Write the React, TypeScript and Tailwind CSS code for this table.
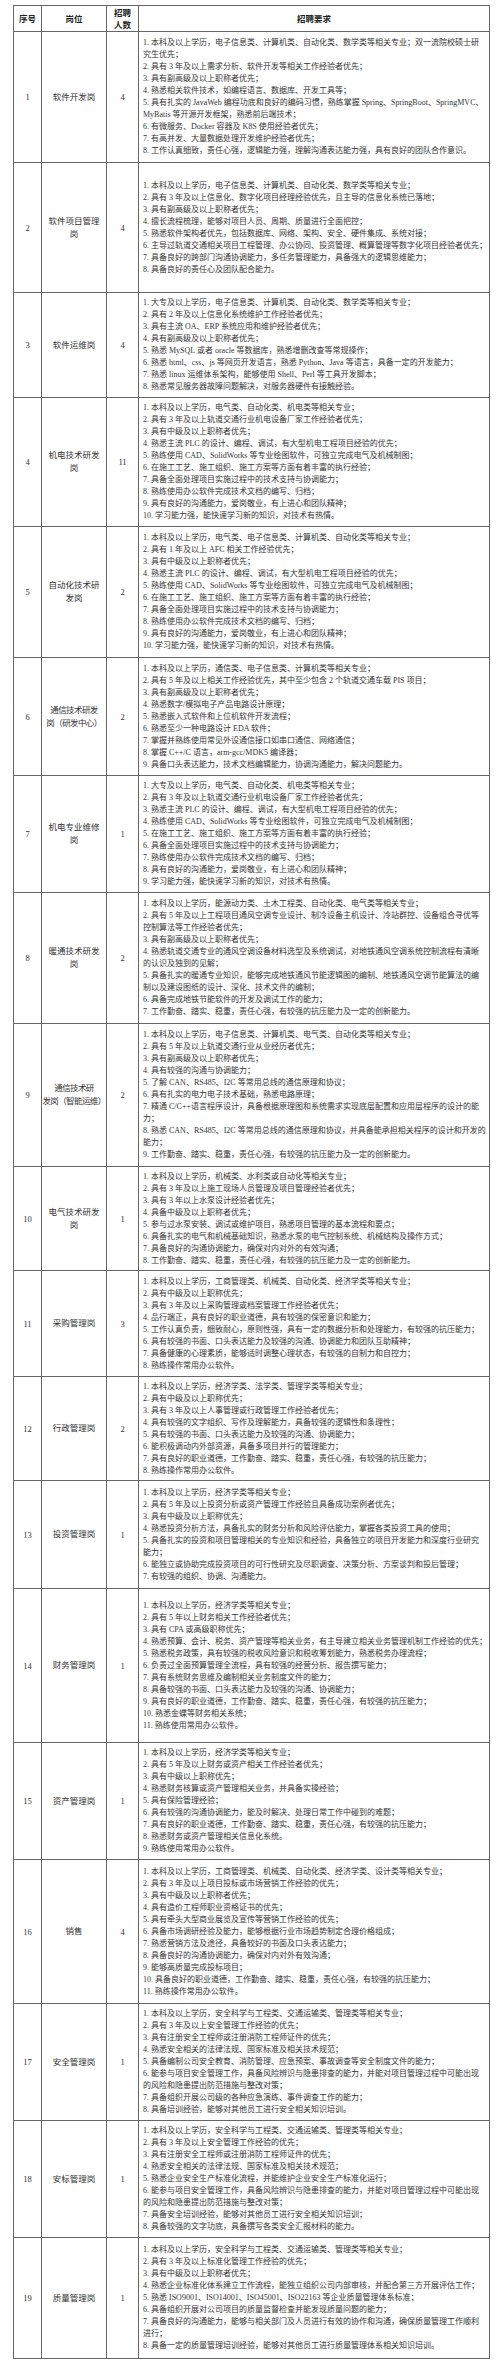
import React from "react";

type Job = {
  no: number;
  title: string;
  count: string;
  h: string;
  tight?: boolean;
  items: string[];
};

const jobs: Job[] = [
  {
    no: 1,
    title: "软件开发岗",
    count: "4",
    h: "h-[131px]",
    items: [
      "1. 本科及以上学历，电子信息类、计算机类、自动化类、数学类等相关专业；双一流院校硕士研\n究生优先；",
      "2. 具有 3 年及以上需求分析、软件开发等相关工作经验者优先；",
      "3. 具有副高级及以上职称者优先；",
      "4. 熟悉相关软件技术，如编程语言、数据库、开发工具等；",
      "5. 具有扎实的 JavaWeb 编程功底和良好的编码习惯，熟练掌握 Spring、SpringBoot、SpringMVC、\nMyBatis 等开源开发框架，熟悉前后端技术；",
      "6. 有微服务、Docker 容器及 K8S 使用经验者优先；",
      "7. 有高并发、大量数据处理开发维护经验者优先；",
      "8. 工作认真细致，责任心强，逻辑能力强，理解沟通表达能力强，具有良好的团队合作意识。",
    ],
  },
  {
    no: 2,
    title: "软件项目管理\n岗",
    count: "4",
    h: "h-[130px]",
    items: [
      "1. 本科及以上学历，电子信息类、计算机类、自动化类、数学类等相关专业；",
      "2. 具有 3 年及以上信息化、数字化项目经理经验优先，且主导的信息化系统已落地；",
      "3. 具有副高级及以上职称者优先；",
      "4. 擅长流程梳理，能够对项目人员、周期、质量进行全面把控；",
      "5. 熟悉软件架构者优先，包括数据库、网络、架构、安全、硬件集成、系统对接；",
      "6. 主导过轨道交通相关项目工程管理、办公协同、投资管理、概算管理等数字化项目经验者优先；",
      "7. 具备良好的跨部门沟通协调能力，多任务管理能力，具备强大的逻辑思维能力；",
      "8. 具备良好的责任心及团队配合能力。",
    ],
  },
  {
    no: 3,
    title: "软件运维岗",
    count: "4",
    h: "h-[105px]",
    items: [
      "1. 大专及以上学历，电子信息类、计算机类、自动化类、数学类等相关专业；",
      "2. 具有 2 年及以上信息化系统维护工作经验者优先；",
      "3. 具有主流 OA、ERP 系统应用和维护经验者优先；",
      "4. 具有副高级及以上职称者优先；",
      "5. 熟悉 MySQL 或者 oracle 等数据库，熟悉增删改查等常规操作；",
      "6. 熟悉 html、css、js 等网页开发语言，熟悉 Python、Java 等语言，具备一定的开发能力；",
      "7. 熟悉 linux 运维体系架构，能够使用 Shell、Perl 等工具开发脚本；",
      "8. 熟悉常见服务器故障问题解决，对服务器硬件有接触经验。",
    ],
  },
  {
    no: 4,
    title: "机电技术研发\n岗",
    count: "11",
    h: "h-[129px]",
    items: [
      "1. 本科及以上学历，电气类、自动化类、机电类等相关专业；",
      "2. 具有 3 年及以上轨道交通行业机电设备厂家工作经验者优先；",
      "3. 具有中级及以上职称者优先；",
      "4. 熟悉主流 PLC 的设计、编程、调试，有大型机电工程项目经验的优先；",
      "5. 熟练使用 CAD、SolidWorks 等专业绘图软件，可独立完成电气及机械制图；",
      "6. 在施工工艺、施工组织、施工方案等方面有着丰富的执行经验；",
      "7. 具备全面处理项目实施过程中的技术支持与协调能力；",
      "8. 熟练使用办公软件完成技术文档的编写、归档；",
      "9. 具有良好的沟通能力，爱岗敬业，有上进心和团队精神；",
      "10. 学习能力强，能快速学习新的知识，对技术有热情。",
    ],
  },
  {
    no: 5,
    title: "自动化技术研\n发岗",
    count: "2",
    h: "h-[131px]",
    items: [
      "1. 本科及以上学历，电气类、电子信息类、计算机类、自动化类等相关专业；",
      "2. 具有 1 年及以上 AFC 相关工作经验优先；",
      "3. 具有中级及以上职称者优先；",
      "4. 熟悉主流 PLC 的设计、编程、调试，有大型机电工程项目经验的优先；",
      "5. 熟练使用 CAD、SolidWorks 等专业绘图软件，可独立完成电气及机械制图；",
      "6. 在施工工艺、施工组织、施工方案等方面有着丰富的执行经验；",
      "7. 具备全面处理项目实施过程中的技术支持与协调能力；",
      "8. 熟练使用办公软件完成技术文档的编写、归档；",
      "9. 具有良好的沟通能力，爱岗敬业，有上进心和团队精神；",
      "10. 学习能力强，能快速学习新的知识，对技术有热情。",
    ],
  },
  {
    no: 6,
    title: "通信技术研发\n岗（研发中心）",
    count: "2",
    h: "h-[118px]",
    tight: true,
    items: [
      "1. 本科及以上学历，通信类、电子信息类、计算机类等相关专业；",
      "2. 具有 5 年及以上相关工作经验优先，其中至少包含 2 个轨道交通车载 PIS 项目；",
      "3. 具有副高级及以上职称者优先；",
      "4. 熟悉数字/模拟电子产品电路设计原理；",
      "5. 熟悉嵌入式软件和上位机软件开发流程；",
      "6. 熟悉至少一种电路设计 EDA 软件；",
      "7. 掌握并熟练使用常见外设通信接口如串口通信、网络通信；",
      "8. 掌握 C++/C 语言，arm-gcc/MDK5 编译器；",
      "9. 具备口头表达能力，技术文档编辑能力，协调沟通能力，解决问题能力。",
    ],
  },
  {
    no: 7,
    title: "机电专业维修\n岗",
    count: "1",
    h: "h-[117px]",
    items: [
      "1. 大专及以上学历，电气类、自动化类、机电类等相关专业；",
      "2. 具有 3 年及以上轨道交通行业机电设备厂家工作经验者优先；",
      "3. 熟悉主流 PLC 的设计、编程、调试，有大型机电工程项目经验的优先；",
      "4. 熟练使用 CAD、SolidWorks 等专业绘图软件，可独立完成电气及机械制图；",
      "5. 在施工工艺、施工组织、施工方案等方面有着丰富的执行经验；",
      "6. 具备全面处理项目实施过程中的技术支持与协调能力；",
      "7. 熟练使用办公软件完成技术文档的编写、归档；",
      "8. 具有良好的沟通能力，爱岗敬业，有上进心和团队精神；",
      "9. 学习能力强，能快速学习新的知识，对技术有热情。",
    ],
  },
  {
    no: 8,
    title: "暖通技术研发\n岗",
    count: "2",
    h: "h-[131px]",
    items: [
      "1. 本科及以上学历，能源动力类、土木工程类、自动化类、电气类等相关专业；",
      "2. 具有 5 年及以上工程项目通风空调专业设计、制冷设备主机设计、冷站群控、设备组合寻优等\n控制算法等工作经验者优先；",
      "3. 具有副高级及以上职称者优先；",
      "4. 熟悉轨道交通专业的通风空调设备材料选型及系统调试，对地铁通风空调系统控制流程有清晰\n的认识及独到的见解；",
      "5. 具备扎实的暖通专业知识，能够完成地铁通风节能逻辑图的编制、地铁通风空调节能算法的编\n制以及建设图纸的设计、深化、技术文件的编制；",
      "6. 具备完成地铁节能软件的开发及调试工作的能力；",
      "7. 工作勤奋、踏实、稳重，责任心强，有较强的抗压能力及一定的创新能力。",
    ],
  },
  {
    no: 9,
    title: "通信技术研\n发岗（智能运维）",
    count: "2",
    h: "h-[143px]",
    tight: true,
    items: [
      "1. 本科及以上学历，电子信息类、计算机类、电气类、自动化类等相关专业；",
      "2. 具有 5 年及以上轨道交通行业从业经历者优先；",
      "3. 具有副高级及以上职称者优先；",
      "4. 具有较强的沟通与协调能力；",
      "5. 了解 CAN、RS485、I2C 等常用总线的通信原理和协议；",
      "6. 具有扎实的电力电子技术基础，熟悉电路原理；",
      "7. 精通 C/C++语言程序设计，具备根据原理图和系统需求实现底层配置和应用层程序的设计的能\n力；",
      "8. 熟悉 CAN、RS485、I2C 等常用总线的通信原理和协议，并具备能承担相关程序的设计和开发的\n能力；",
      "9. 工作勤奋、踏实、稳重，责任心强，有较强的抗压能力及一定的创新能力。",
    ],
  },
  {
    no: 10,
    title: "电气技术研发\n岗",
    count: "1",
    h: "h-[104px]",
    items: [
      "1. 本科及以上学历，机械类、水利类或自动化等相关专业；",
      "2. 具有 3 年及以上施工现场人员管理及项目管理经验者优先；",
      "3. 具有 3 年以上水泵设计经验者优先；",
      "4. 具备中级及以上职称者优先；",
      "5. 参与过水泵安装、调试或维护项目，熟悉项目管理的基本流程和要点；",
      "6. 具备扎实的电气和机械基础知识，熟悉水泵的电气控制系统、机械结构及操作方式；",
      "7. 具备良好的沟通协调能力，确保对内对外的有效沟通；",
      "8. 工作勤奋、踏实、稳重，责任心强，有较强的抗压能力及一定的创新能力。",
    ],
  },
  {
    no: 11,
    title: "采购管理岗",
    count: "3",
    h: "h-[106px]",
    items: [
      "1. 本科及以上学历，工商管理类、机械类、自动化类、经济学类等相关专业；",
      "2. 具有中级及以上职称优先；",
      "3. 具有 3 年及以上采购管理或档案管理工作经验者优先；",
      "4. 品行端正，具有良好的职业道德，具有较强的保密意识和能力；",
      "5. 工作认真负责，细致耐心，原则性强，具有一定的数据分析和处理能力，有较强的抗压能力；",
      "6. 具有较强的书面、口头表达能力及较强的沟通、协调能力和团队互助精神；",
      "7. 具备健康的心理素质，能够适时调整心理状态，有较强的自制力和自控力；",
      "8. 熟练操作常用办公软件。",
    ],
  },
  {
    no: 12,
    title: "行政管理岗",
    count: "2",
    h: "h-[104px]",
    items: [
      "1. 本科及以上学历，经济学类、法学类、管理学类等相关专业；",
      "2. 具有中级及以上职称优先；",
      "3. 具有 3 年及以上人事管理或行政管理工作经验者优先；",
      "4. 具有较强的文字组织、写作及理解能力，具备较强的逻辑性和条理性；",
      "5. 具有较强的书面、口头表达能力及较强的沟通、协调能力；",
      "6. 能积极调动内外部资源，具备多项目并行的管理能力；",
      "7. 具有良好的职业道德，工作勤奋、踏实、稳重，责任心强，有较强的抗压能力；",
      "8. 熟练操作常用办公软件。",
    ],
  },
  {
    no: 13,
    title: "投资管理岗",
    count: "1",
    h: "h-[108px]",
    items: [
      "1. 本科及以上学历，经济学类等相关专业；",
      "2. 具有 5 年及以上投资分析或资产管理工作经验且具备成功案例者优先；",
      "3. 具有中级及以上职称优先；",
      "4. 熟悉投资分析方法，具备扎实的财务分析和风险评估能力，掌握各类投资工具的使用；",
      "5. 具备扎实的投资和项目管理相关的专业知识和经验，具备独立的项目开发能力和深度行业研究\n能力；",
      "6. 能独立或协助完成投资项目的可行性研究及尽职调查、决策分析、方案谈判和投后管理；",
      "7. 有较强的组织、协调、沟通能力。",
    ],
  },
  {
    no: 14,
    title: "财务管理岗",
    count: "1",
    h: "h-[154px]",
    items: [
      "1. 本科及以上学历，经济学类等相关专业；",
      "2. 具有 5 年以上财务相关工作经验者优先；",
      "3. 具有 CPA 或高级职称优先；",
      "4. 熟悉预算、会计、税务、资产管理等相关业务，有主导建立相关业务管理机制工作经验的优先；",
      "5. 熟悉税务政策，具有较强的税收风险意识和税收筹划能力，熟悉税务办理流程；",
      "6. 负责过全面预算管理全流程，具有较强的经营分析、报告撰写能力；",
      "7. 具有系统财务思维及编制相关业务制度文件的能力；",
      "8. 具备较强的书面、口头表达能力及较强的沟通、协调能力；",
      "9. 具有良好的职业道德，工作勤奋、踏实、稳重，责任心强，有较强的抗压能力；",
      "10. 熟悉金蝶等财务相关系统；",
      "11. 熟练使用常用办公软件。",
    ],
  },
  {
    no: 15,
    title: "资产管理岗",
    count: "1",
    h: "h-[117px]",
    items: [
      "1. 本科及以上学历，经济学类等相关专业；",
      "2. 具有 5 年及以上财务或资产相关工作经验者优先；",
      "3. 具有中级以上职称优先；",
      "4. 熟悉财务核算或资产管理相关业务，并具备实操经验；",
      "5. 具有保险管理经验；",
      "6. 具有较强的沟通协调能力，能及时解决、处理日常工作中碰到的难题；",
      "7. 具有良好的职业道德，工作勤奋、踏实、稳重，责任心强，有较强的抗压能力；",
      "8. 熟悉财务或资产管理相关信息化系统。",
      "9. 熟练使用常用办公软件。",
    ],
  },
  {
    no: 16,
    title: "销售",
    count: "4",
    h: "h-[144px]",
    items: [
      "1. 本科及以上学历，工商管理类、机械类、自动化类、经济学类、设计类等相关专业；",
      "2. 具有 3 年及以上项目投标或市场营销工作经验的优先；",
      "3. 具有中级及以上职称者优先；",
      "4. 具有造价工程师职业资格证书的优先；",
      "5. 具有牵头大型商业展览及宣传等营销工作经验的优先；",
      "6. 具备市场调研经验及能力，能够根据行业市场趋势制定合理价格组成；",
      "7. 熟悉营销方法及途径，具备较好的书面及口头表达能力；",
      "8. 具备良好的沟通协调能力，确保对内对外有效沟通；",
      "9. 能够高质量完成投标项目；",
      "10. 具备良好的职业道德，工作勤奋、踏实、稳重，责任心强，有较强的抗压能力；",
      "11. 熟练操作常用办公软件。",
    ],
  },
  {
    no: 17,
    title: "安全管理岗",
    count: "1",
    h: "h-[117px]",
    items: [
      "1. 本科及以上学历，安全科学与工程类、交通运输类、管理类等相关专业；",
      "2. 具有 3 年及以上安全管理工作经验的优先；",
      "3. 具有注册安全工程师或注册消防工程师证件的优先；",
      "4. 熟悉安全相关的法律法规、国家标准及相关技术规范；",
      "5. 具备编制公司安全教育、消防管理、应急预案、事故调查等安全制度文件的能力；",
      "6. 能参与项目安全管理工作，具备风险辨识与隐患排查的能力，并能对项目管理过程中可能出现\n的风险和隐患提出防范措施与整改对策；",
      "7. 具备组织开展公司级的各种应急演练、事件调查工作的能力；",
      "8. 具备培训经验，能够对其他员工进行安全相关知识培训。",
    ],
  },
  {
    no: 18,
    title: "安标管理岗",
    count: "1",
    h: "h-[117px]",
    items: [
      "1. 本科及以上学历，安全科学与工程类、交通运输类、管理类等相关专业；",
      "2. 具有 3 年及以上安全管理工作经验的优先；",
      "3. 具有注册安全工程师或注册消防工程师证件的优先；",
      "4. 熟悉安全相关的法律法规、国家标准及相关技术规范；",
      "5. 熟悉企业安全生产标准化流程，并能维护企业安全生产标准化运行；",
      "6. 能参与项目安全管理工作，具备风险辨识与隐患排查的能力，并能对项目管理过程中可能出现\n的风险和隐患提出防范措施与整改对策；",
      "7. 具备安全培训经验，能够对其他员工进行安全相关知识培训；",
      "8. 具备较强的文字功底，具备撰写各类安全汇报材料的能力。",
    ],
  },
  {
    no: 19,
    title: "质量管理岗",
    count: "1",
    h: "h-[121px]",
    items: [
      "1. 本科及以上学历，安全科学与工程类、交通运输类、管理类等相关专业；",
      "2. 具有 3 年及以上标准化管理工作经验的优先；",
      "3. 具有中级及以上职称者优先；",
      "4. 熟悉企业标准化体系建立工作流程，能独立组织公司内部审核，并配合第三方开展评估工作；",
      "5. 熟悉 ISO9001、ISO14001、ISO45001、ISO22163 等企业质量管理体系标准；",
      "6. 具备组织开展对公司项目的质量监督检查并能发现质量问题的能力；",
      "7. 具备良好的沟通能力，能够与相关部门及人员进行有效的协作和沟通，确保质量管理工作顺利\n进行；",
      "8. 具备一定的质量管理培训经验，能够对其他员工进行质量管理体系相关知识培训。",
    ],
  },
];

const font = "font-['Liberation_Serif','Noto_Sans_CJK_SC',serif]";

export default function App() {
  return (
    <div className={`min-h-[2362px] w-[500px] bg-white pt-[5px] text-[#333] ${font}`}>
      <table className="ml-[13px] w-[477px] table-fixed border-collapse border border-[#666]">
        <colgroup>
          <col className="w-[28px]" />
          <col className="w-[65px]" />
          <col className="w-[32px]" />
          <col />
        </colgroup>
        <thead>
          <tr className="h-[26px] text-[8.5px] font-bold leading-[12px] text-[#222]">
            <th className="border border-[#666] text-center align-middle">序号</th>
            <th className="border border-[#666] text-center align-middle">岗位</th>
            <th className="border border-[#666] text-center align-middle">
              招聘
              <br />
              人数
            </th>
            <th className="border border-[#666] text-center align-middle">招聘要求</th>
          </tr>
        </thead>
        <tbody>
          {jobs.map((job) => (
            <tr key={job.no} className={job.h}>
              <td className="border border-[#666] text-center align-middle text-[8.5px] leading-[12px]">
                {job.no}
              </td>
              <td
                className={`whitespace-pre border border-[#666] text-center align-middle text-[8.5px] leading-[13px] ${
                  job.tight ? "tracking-[-0.6px]" : ""
                }`}
              >
                {job.title}
              </td>
              <td className="border border-[#666] text-center align-middle text-[8.5px] leading-[12px]">
                {job.count}
              </td>
              <td className="border border-[#666] pl-[4px] pr-[2px] align-middle text-[8px] leading-[12px]">
                {job.items.map((item) => (
                  <div key={item} className="whitespace-pre">
                    {item}
                  </div>
                ))}
              </td>
            </tr>
          ))}
        </tbody>
      </table>
    </div>
  );
}
